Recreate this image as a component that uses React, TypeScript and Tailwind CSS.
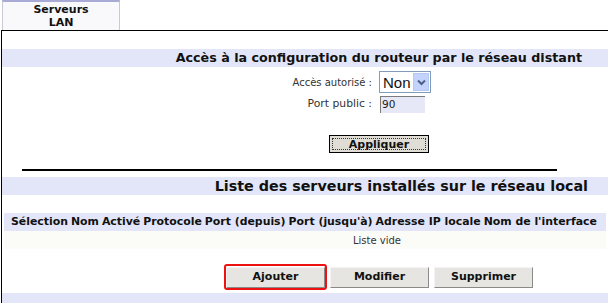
import React from 'react';

const columns = [
  'Sélection',
  'Nom',
  'Activé',
  'Protocole',
  'Port (depuis)',
  "Port (jusqu'à)",
  'Adresse IP locale',
  "Nom de l'interface",
];

const SectionHeader: React.FC<{ title: string; className: string }> = ({ title, className }) => (
  <div className={`h-[18px] bg-[#e3e6f8] flex items-center justify-end ${className}`}>
    <span className="font-bold text-[#111] leading-none">{title}</span>
  </div>
);

const ActionButton: React.FC<{ label: string; className?: string }> = ({ label, className = '' }) => (
  <button
    className={`h-[21px] bg-[#e6e5e1] border border-t-[#f4f4f4] border-l-[#f4f4f4] border-r-[#8a8a8a] border-b-[#8a8a8a] text-[11px] font-bold text-[#111] ${className}`}
  >
    {label}
  </button>
);

export default function App() {
  return (
    <div className="w-[608px] h-[303px] bg-white overflow-hidden font-['DejaVu_Sans',Verdana,sans-serif]">
      {/* Tab */}
      <div className="ml-[2px] w-[118px] h-[30px] bg-[#f9f9fc] border-t-2 border-t-[#a9abd6] border-x border-x-[#c9c9d4] flex flex-col items-center pt-[1px]">
        <span className="text-[11px] font-bold leading-[13px] text-[#111]">Serveurs</span>
        <span className="text-[11px] font-bold leading-[13px] text-[#111]">LAN</span>
      </div>

      {/* Panel */}
      <div className="ml-px w-[607px] border-l border-t border-black">
        <div className="h-[18px]" />
        <SectionHeader
          title="Accès à la configuration du routeur par le réseau distant"
          className="pr-[26px] text-[12.7px]"
        />

        {/* Form rows */}
        <div className="mt-[4px] flex items-center h-[22px]">
          <span className="w-[370px] text-right text-[10px] text-[#333]">Accès autorisé :</span>
          <div className="ml-[7px] w-[52px] h-[22px] border border-[#7f9db9] bg-white flex items-center">
            <span className="flex-1 pl-[3px] text-[15px] leading-none text-[#111] font-['Liberation_Sans',Arial,sans-serif]">Non</span>
            <div className="w-[16px] h-[18px] mr-px bg-[#c3d3fb] border border-[#b5c8f3] flex items-center justify-center">
              <svg width="9" height="7" viewBox="0 0 9 7">
                <path d="M1 1.5 L4.5 5 L8 1.5" stroke="#4d6185" strokeWidth="2" fill="none" />
              </svg>
            </div>
          </div>
        </div>
        <div className="mt-[3px] flex items-center h-[17px]">
          <span className="w-[370px] text-right text-[10.8px] text-[#333]">Port public :</span>
          <div className="ml-[8px] w-[45px] h-[17px] bg-[#e6e7f7] border-t border-l border-[#7b7b7b] flex items-center pl-[1px]">
            <span className="text-[10.5px] text-[#222]">90</span>
          </div>
        </div>

        <div className="mt-[22px] flex">
          <button className="ml-[327px] w-[100px] h-[18px] bg-[#e0ddd6] border border-black flex items-center justify-center p-[2px]">
            <span className="w-full h-full border border-dotted border-[#333] flex items-center justify-center text-[11px] font-bold text-[#111] leading-none">
              Appliquer
            </span>
          </button>
        </div>

        <div className="mt-[16px] ml-[20px] w-[535px] h-[2px] bg-black" />

        <div className="h-[6px]" />
        <SectionHeader
          title="Liste des serveurs installés sur le réseau local"
          className="pr-[20px] text-[14.3px]"
        />

        {/* Table */}
        <div className="mt-[18px] w-[602px] ml-[2px]">
          <div className="h-[18px] bg-[#e3e6f8] flex items-center pl-[7px] gap-[3px]">
            {columns.map((c) => (
              <span key={c} className="text-[10.9px] font-bold text-[#111] whitespace-nowrap">
                {c}
              </span>
            ))}
          </div>
          <div className="h-[18px] bg-[#fbfbf8] flex items-center">
            <span className="ml-[349px] text-[10px] text-[#333]">Liste vide</span>
          </div>
        </div>

        {/* Action buttons */}
        <div className="mt-[15px] flex items-center h-[26px]">
          <div className="ml-[222px] w-[103px] h-[26px] border-2 border-[#ee1111] rounded-[3px] flex items-center justify-center">
            <ActionButton label="Ajouter" className="w-[99px]" />
          </div>
          <ActionButton label="Modifier" className="ml-[3px] w-[99px]" />
          <ActionButton label="Supprimer" className="ml-[5px] w-[99px]" />
        </div>

        <div className="mt-[3px] h-[12px] bg-[#e3e6f8]" />
      </div>
    </div>
  );
}
